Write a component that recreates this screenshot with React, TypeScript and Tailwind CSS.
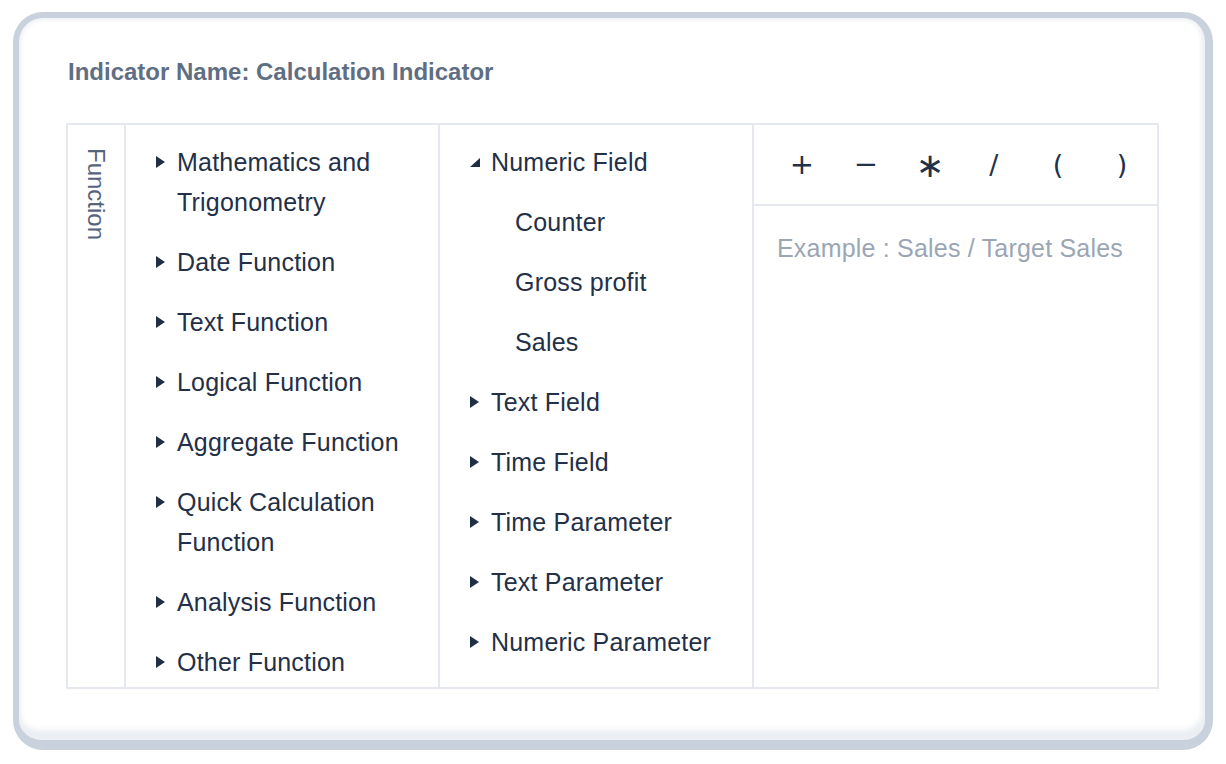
import React from 'react';

type Node = { label: string; lines?: number };

const functions: Node[] = [
  { label: 'Mathematics and Trigonometry', lines: 2 },
  { label: 'Date Function' },
  { label: 'Text Function' },
  { label: 'Logical Function' },
  { label: 'Aggregate Function' },
  { label: 'Quick Calculation Function', lines: 2 },
  { label: 'Analysis Function' },
  { label: 'Other Function' },
];

const fields = ['Text Field', 'Time Field', 'Time Parameter', 'Text Parameter', 'Numeric Parameter'];
const numericFields = ['Counter', 'Gross profit', 'Sales'];

function CaretRight() {
  return (
    <svg width="9" height="12" viewBox="0 0 9 12" className="shrink-0">
      <polygon points="0,0 9,6 0,12" fill="#1f2d45" />
    </svg>
  );
}

function CaretOpen() {
  return (
    <svg width="10" height="9" viewBox="0 0 10 9" className="shrink-0">
      <polygon points="10,0 10,9 0,9" fill="#1f2d45" />
    </svg>
  );
}

function TreeRow({ label, open }: { label: string; open?: boolean }) {
  return (
    <div className="flex items-start">
      <div className="flex h-10 w-[10px] items-center justify-start">
        {open ? <CaretOpen /> : <CaretRight />}
      </div>
      <span className="ml-[11px] leading-10">{label}</span>
    </div>
  );
}

export default function App() {
  return (
    <div className="w-[1226px] h-[764px] bg-white pt-[12px] pl-[13px] font-['Liberation_Sans',Arial,sans-serif]">
      <div className="w-[1200px] h-[738px] rounded-[30px] border-t-[6px] border-l-[6px] border-r-[8px] border-b-[10px] border-[#c9d1dc] bg-white shadow-[inset_0_0_5px_2px_#edf0f4,inset_-2px_-10px_6px_#eaeef3] pl-[47px] pt-[39px]">
        <h1 className="pl-[2px] text-[24px] leading-[30px] font-bold text-[#606e84]">
          Indicator Name: Calculation Indicator
        </h1>

        <div className="mt-[36px] flex h-[566px] w-[1093px] border-2 border-[#e5e9ef] text-[25px] tracking-[0.2px] text-[#233048]">
          {/* vertical tab */}
          <div className="w-[56px] flex justify-center pt-[23px]">
            <span className="[writing-mode:vertical-rl] text-[24px] leading-[28px] tracking-normal text-[#56647a]">Function</span>
          </div>

          {/* function categories */}
          <div className="w-[314px] border-l-2 border-[#e5e9ef] pl-[30px] pt-[17px] flex flex-col gap-5">
            {functions.map(f => (
              <div key={f.label} className="flex items-start">
                <div className="flex h-10 w-[10px] items-center">
                  <CaretRight />
                </div>
                <span className={`ml-[11px] leading-10 ${f.lines === 2 ? 'w-[230px]' : ''}`}>{f.label}</span>
              </div>
            ))}
          </div>

          {/* fields */}
          <div className="w-[314px] border-l-2 border-[#e5e9ef] pl-[30px] pt-[17px] flex flex-col gap-5">
            <TreeRow label="Numeric Field" open />
            {numericFields.map(n => (
              <div key={n} className="pl-[45px] leading-10">{n}</div>
            ))}
            {fields.map(f => (
              <TreeRow key={f} label={f} />
            ))}
          </div>

          {/* formula editor */}
          <div className="flex-1 border-l-2 border-[#e5e9ef] flex flex-col">
            <div className="h-[81px] border-b-2 border-[#e5e9ef] flex items-center pl-[16px] font-['DejaVu_Sans',sans-serif] text-[#22314a]">
              <span className="w-16 text-center text-[29px] leading-none">+</span>
              <span className="w-16 text-center text-[29px] leading-none">−</span>
              <span className="w-16 text-center text-[34px] leading-none">∗</span>
              <span className="w-16 text-center text-[27px] leading-none">/</span>
              <span className="w-16 text-center text-[27px] leading-none">(</span>
              <span className="w-16 text-center text-[27px] leading-none">)</span>
            </div>
            <div className="pl-[23px] pt-[22px] leading-10 tracking-[0.2px] text-[#9ba6b5]">
              Example : Sales / Target Sales
            </div>
          </div>
        </div>
      </div>
    </div>
  );
}
